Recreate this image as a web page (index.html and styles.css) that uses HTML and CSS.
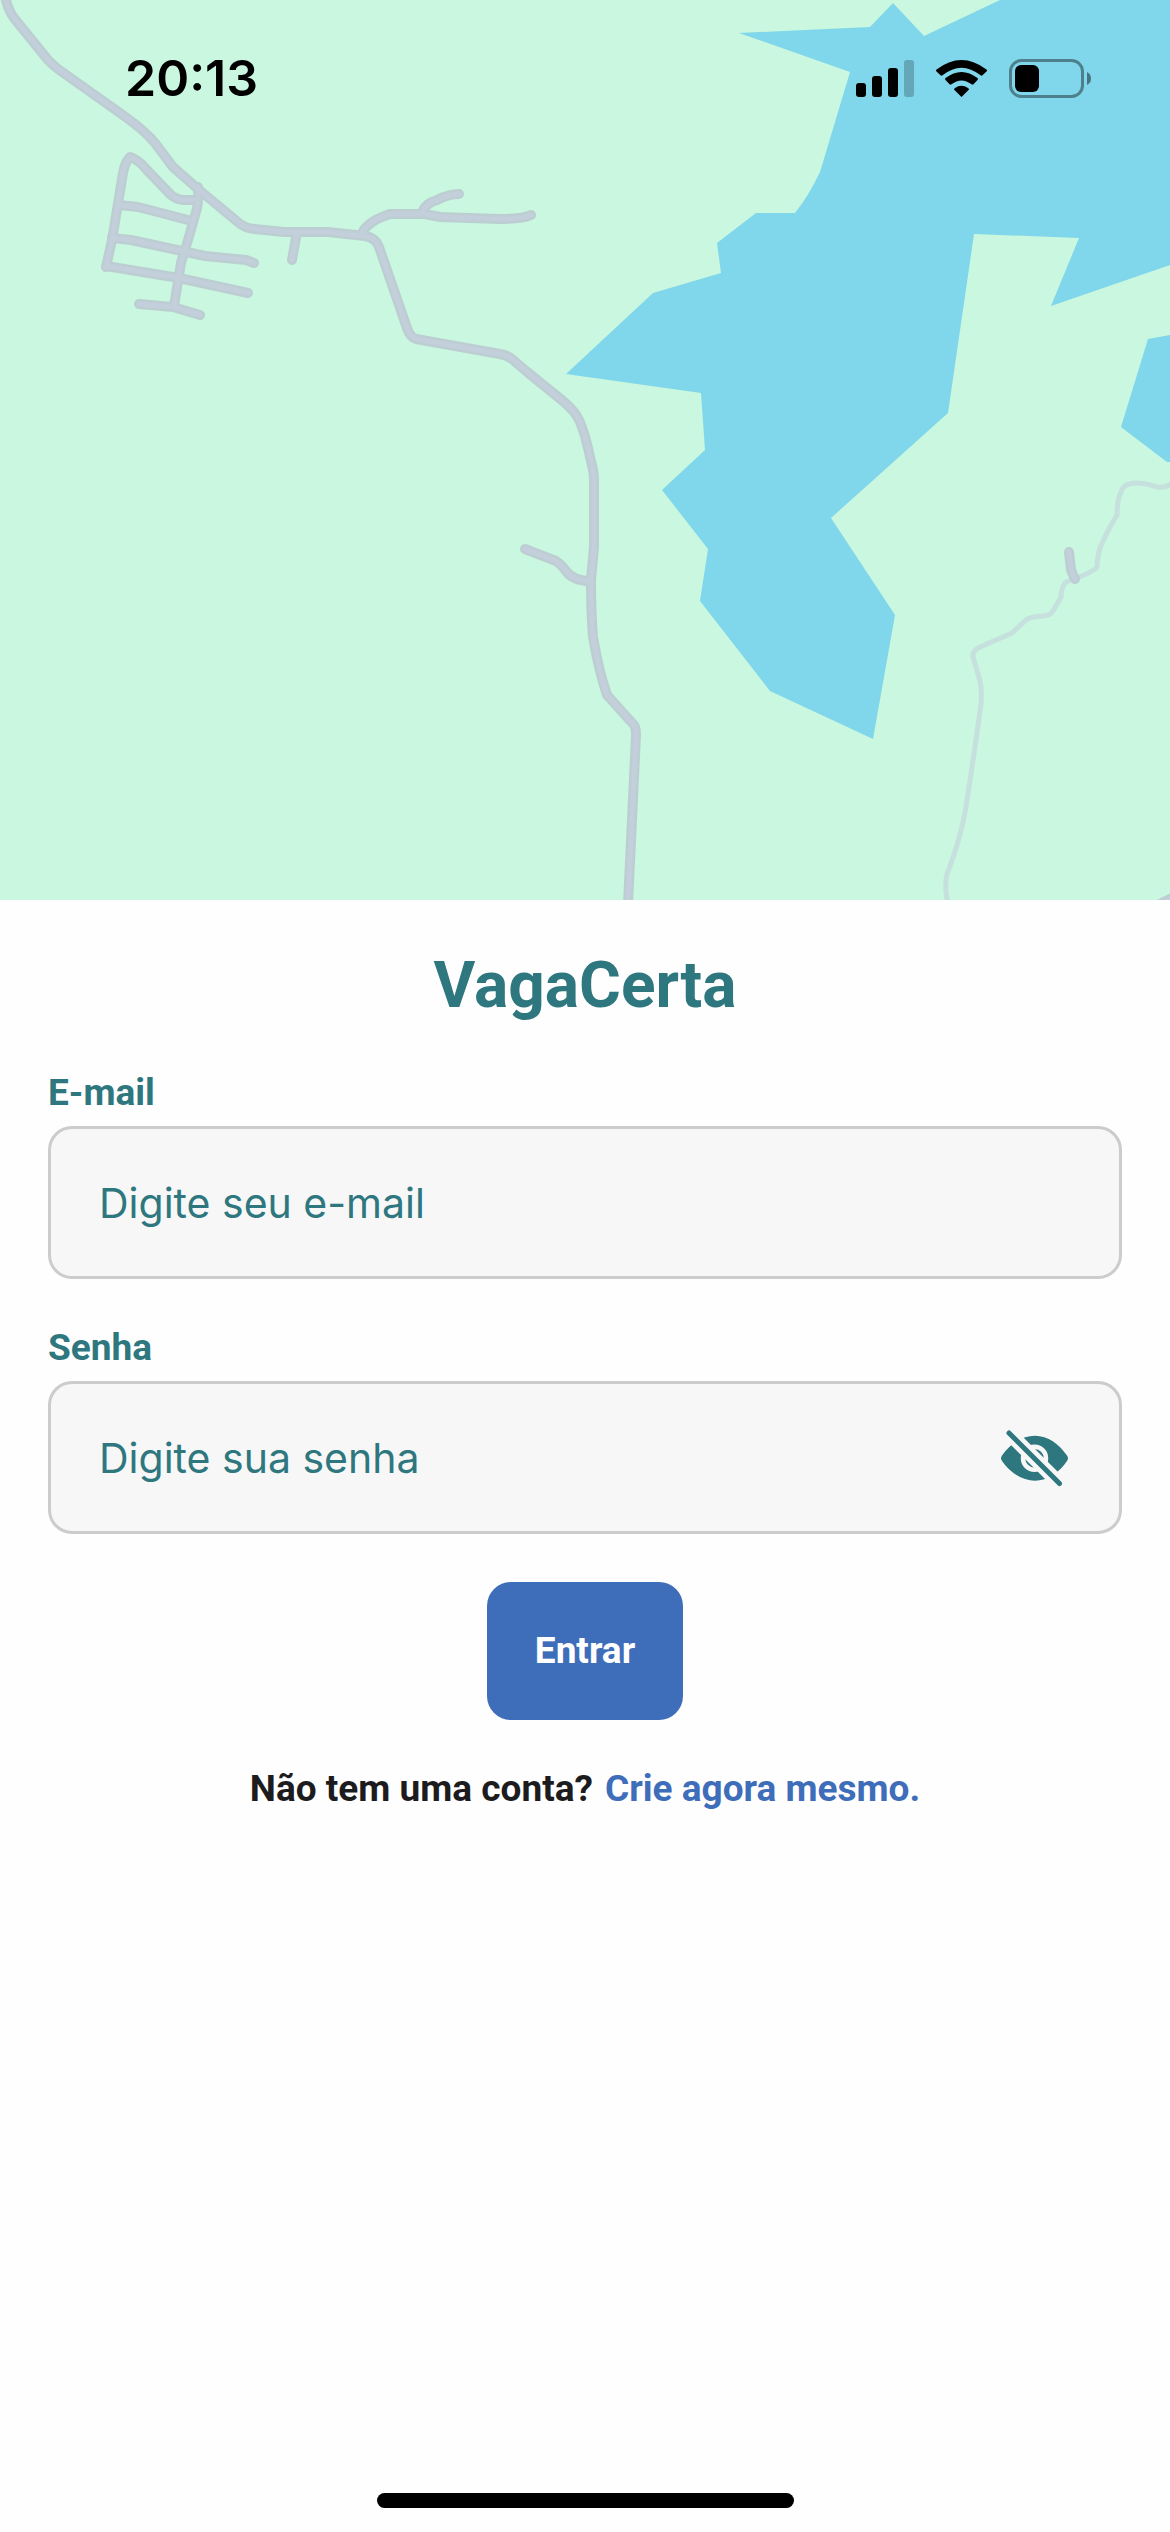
FILE: index.html
```html
<!DOCTYPE html>
<html lang="pt-BR">
<head>
<meta charset="utf-8">
<meta name="viewport" content="width=device-width, initial-scale=1">
<title>VagaCerta</title>
<link rel="stylesheet" href="styles.css">
</head>
<body>
<div class="screen">
  <header class="hero">
    <svg class="map" viewBox="0 0 1170 900" preserveAspectRatio="xMidYMid slice" aria-hidden="true">
      <defs>
        <g id="roads">
          <path d="M5 -4Q8 10 14 18L48 60Q52 64 58 69L127 118Q145 131 155 143L173 167 198 189 239 223 Q245 228 254 229L284 232H328L365 236Q376 238 379 247L407 328Q410 337 416 339L500 354Q507 355 512 359L526 371 563 401Q576 412 580 422Q585 434 588 448L593 470Q594 474 594 480V547L591 580Q591 612 593 637Q599 672 607 695L634 725Q636 728 636 735L628 904"/>
          <path d="M106 267L112 240 123 173Q125 162 130 157Q139 160 146 169L170 194Q175 199 183 200H194"/>
          <path d="M198 187Q199 203 196 212L188 240 181 263 174 306"/>
          <path d="M119 205L138 207 165 214 188 220"/>
          <path d="M112 238L131 240 205 256 246 260 254 263"/>
          <path d="M106 266L179 278 248 293"/>
          <path d="M139 304L173 307 200 315"/>
          <path d="M297 232L292 260"/>
          <path d="M362 233Q368 221 390 214H425L440 217 500 219Q522 219 531 215"/>
          <path d="M422 212Q426 203 437 200Q449 194 459 194"/>
          <path d="M525 549L556 561Q561 564 566 571Q573 581 591 581"/>
          <path d="M1069 552L1071 570 1075 579"/>
          <path d="M1158 905L1176 896"/>
        </g>
      </defs>
      <path class="water" d="M1000 0L924 36 893 3 870 27 739 33 850 72 820 172Q808 197 795 213H756L717 243 721 273 653 293 566 374 701 393 705 450 662 490 708 549 700 601 770 691 873 739 895 615 831 518 948 413 974 234 1079 238 1051 306 1170 265V0Z"/>
      <path class="water" d="M1170 335L1148 339 1121 427 1167 462H1170Z"/>
      <path class="trail" d="M1174 482Q1164 490 1154 486Q1125 478 1121 492Q1117 500 1117 515Q1108 529 1100 548Q1097 559 1097 567Q1094 572 1066 582Q1061 587 1061 597L1053 611Q1050 616 1042 616Q1029 617 1026 620L1012 633 980 647Q972 651 973 657L980 681Q982 690 981 704L975 747 966 807Q961 837 949 869Q943 881 948 904"/>
      <use href="#roads" class="road-edge"/>
      <use href="#roads" class="road-core"/>
    </svg>
    <div class="status">
      <span class="clock">20:13</span>
      <svg class="indicators" viewBox="0 0 235 39" role="img" aria-label="Sinal, Wi-Fi e bateria">
        <rect x="0" y="24" width="10" height="14" rx="3"/>
        <rect x="16" y="17" width="10" height="21" rx="3"/>
        <rect x="32" y="9" width="10" height="29" rx="3"/>
        <rect x="48" y="1" width="10" height="37" rx="3" opacity=".22"/>
        <path d="M105.500 38L98 30.500Q98 29.500 99 29Q105.500 24.500 112 29Q113 29.500 113 30.500Z"/>
        <path d="M89.500 21Q88.500 20 89.500 19Q105.500 7 121.500 19Q122.500 20 121.500 21L117.500 25.300Q116.500 26 115.500 25.300Q105.500 17.500 95.500 25.300Q94.500 26 93.500 25.300Z"/>
        <path d="M80.500 12.500Q79.500 11.500 80.500 10.500Q105.500 -8.500 130.500 10.500Q131.500 11.500 130.500 12.500L126.500 16.300Q125.500 17 124.500 16.300Q105.500 1 86.500 16.300Q85.500 17 84.500 16.300Z"/>
        <rect x="154.500" y="1.500" width="72" height="36" rx="11" fill="none" stroke="#000" stroke-width="3" opacity=".4"/>
        <rect x="159" y="6" width="24" height="27" rx="6"/>
        <path d="M231 13Q235 15 235 19.500Q235 24 231 26Z" opacity=".45"/>
      </svg>
    </div>
  </header>

  <main class="login">
    <h1 class="title">VagaCerta</h1>
    <form class="form">
      <div class="group">
        <label class="label" for="email">E-mail</label>
        <div class="field">
          <input class="input" id="email" type="email" placeholder="Digite seu e-mail">
        </div>
      </div>
      <div class="group">
        <label class="label" for="senha">Senha</label>
        <div class="field">
          <input class="input" id="senha" type="password" placeholder="Digite sua senha">
          <button class="toggle" type="button" aria-label="Mostrar senha">
            <svg class="eye" viewBox="0 0 72 72" aria-hidden="true">
              <path fill="#2e777f" d="M3 33.500C11 22 23 13.700 36 13.700S60 22 68 33.500Q70 36.300 68 39C60 50.500 49 58.700 36 58.700S11 50.500 3 39Q1 36.300 3 33.500Z"/>
              <circle cx="35.500" cy="36.300" r="11.500" fill="#2e777f" stroke="#f7f7f7" stroke-width="4.500"/>
              <path d="M2 3L70 71" stroke="#f7f7f7" stroke-width="14"/>
              <path d="M10 11L60.500 61.500" stroke="#2e777f" stroke-width="5" stroke-linecap="round"/>
            </svg>
          </button>
        </div>
      </div>
      <button class="submit" type="submit">Entrar</button>
    </form>
    <p class="signup">Não tem uma conta? <a class="link" href="#cadastro">Crie agora mesmo.</a></p>
  </main>

  <div class="home-bar"></div>
</div>
</body>
</html>
```
FILE: styles.css
```css
* {
  box-sizing: border-box;
}

body {
  margin: 0;
  background: #fefefe;
  color: #1c1c1e;
  font: 700 37px/42px Roboto, sans-serif;
}

.screen {
  display: flex;
  flex-direction: column;
  min-height: 100vh;
}

/* Map header */
.hero {
  position: relative;
  aspect-ratio: 13 / 10;
  overflow: hidden;
  background: #c9f7e0;
}

.map {
  display: block;
  width: 100%;
  height: 100%;
}

.water {
  fill: #80d6ea;
}

.trail,
.road-edge,
.road-core {
  fill: none;
  stroke-linecap: round;
  stroke-linejoin: round;
}

.trail {
  stroke: #c6e0dd;
  stroke-width: 5px;
}

.road-edge {
  stroke: #bdced3;
  stroke-width: 10px;
}

.road-core {
  stroke: #c3cfdb;
  stroke-width: 5px;
}

.status {
  position: absolute;
  inset: 0 0 auto;
  display: flex;
  align-items: center;
  justify-content: space-between;
  padding: 48px 79px 0 125px;
  color: #000;
}

.clock {
  font: 600 50px/60px Inter, sans-serif;
}

.indicators {
  width: 235px;
  height: 39px;
}

/* Login form */
.login {
  display: flex;
  flex-direction: column;
  gap: 48px;
  padding: 48px;
}

.title {
  margin: 0;
  color: #2e777f;
  font-size: 64px;
  line-height: 76px;
  text-align: center;
}

.form {
  display: flex;
  flex-direction: column;
  gap: 48px;
}

.group {
  display: flex;
  flex-direction: column;
  gap: 12px;
}

.label {
  color: #2e777f;
}

.field {
  display: flex;
  align-items: center;
  padding: 0 48px;
  border: 3px solid #ccc;
  border-radius: 24px;
  background: #f7f7f7;
}

.input {
  flex: 1;
  min-width: 0;
  padding: 48px 0;
  border: 0;
  outline: 0;
  background: none;
  color: #2e777f;
  font: 400 41px/51px Inter, sans-serif;
  height: 147px;
}

.input::placeholder {
  color: #2e777f;
  opacity: 1;
}

.toggle {
  padding: 0;
  border: 0;
  background: none;
}

.eye {
  display: block;
  width: 72px;
  height: 72px;
  fill: none;
}

.submit {
  align-self: center;
  padding: 48px;
  border: 0;
  border-radius: 24px;
  background: #3e6db9;
  color: #fff;
  font: inherit;
}

.signup {
  display: flex;
  flex-wrap: wrap;
  justify-content: center;
  gap: 12px;
  margin: 0;
}

.link {
  color: #3e6db9;
  text-decoration: none;
}

.home-bar {
  align-self: center;
  width: 417px;
  max-width: 60%;
  height: 15px;
  margin: auto 0 24px;
  border-radius: 8px;
  background: #000;
}
```
